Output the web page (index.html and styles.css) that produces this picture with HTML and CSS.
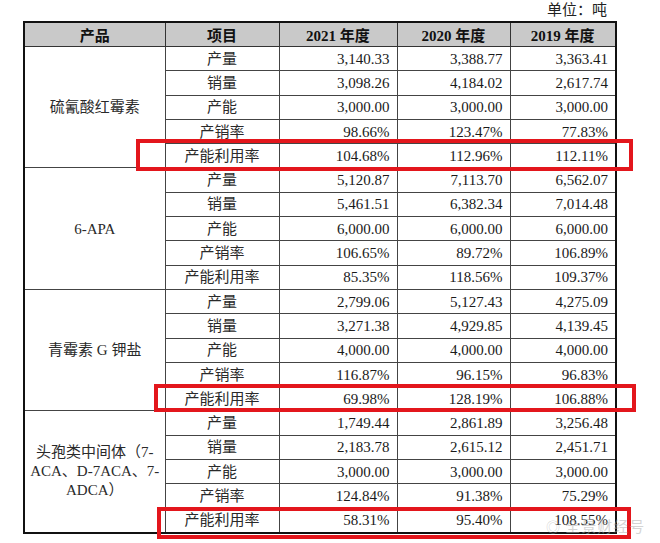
FILE: index.html
```html
<!DOCTYPE html>
<html lang="zh">
<head>
<meta charset="utf-8">
<title>产销量表</title>
<link rel="stylesheet" href="styles.css">
</head>
<body>
<div class="page">
  <div class="unit">单位：吨</div>
  <table class="data">
    <colgroup>
      <col class="c-prod"><col class="c-item"><col class="c-y1"><col class="c-y2"><col class="c-y3">
    </colgroup>
    <thead>
      <tr><th>产品</th><th>项目</th><th>2021 年度</th><th>2020 年度</th><th>2019 年度</th></tr>
    </thead>
    <tbody class="grp">
      <tr><td class="prod" rowspan="5">硫氰酸红霉素</td><td class="item">产量</td><td class="num">3,140.33</td><td class="num">3,388.77</td><td class="num">3,363.41</td></tr>
      <tr><td class="item">销量</td><td class="num">3,098.26</td><td class="num">4,184.02</td><td class="num">2,617.74</td></tr>
      <tr><td class="item">产能</td><td class="num">3,000.00</td><td class="num">3,000.00</td><td class="num">3,000.00</td></tr>
      <tr><td class="item">产销率</td><td class="num">98.66%</td><td class="num">123.47%</td><td class="num">77.83%</td></tr>
      <tr><td class="item">产能利用率</td><td class="num">104.68%</td><td class="num">112.96%</td><td class="num">112.11%</td></tr>
    </tbody>
    <tbody class="grp">
      <tr><td class="prod" rowspan="5">6-APA</td><td class="item">产量</td><td class="num">5,120.87</td><td class="num">7,113.70</td><td class="num">6,562.07</td></tr>
      <tr><td class="item">销量</td><td class="num">5,461.51</td><td class="num">6,382.34</td><td class="num">7,014.48</td></tr>
      <tr><td class="item">产能</td><td class="num">6,000.00</td><td class="num">6,000.00</td><td class="num">6,000.00</td></tr>
      <tr><td class="item">产销率</td><td class="num">106.65%</td><td class="num">89.72%</td><td class="num">106.89%</td></tr>
      <tr><td class="item">产能利用率</td><td class="num">85.35%</td><td class="num">118.56%</td><td class="num">109.37%</td></tr>
    </tbody>
    <tbody class="grp">
      <tr><td class="prod" rowspan="5">青霉素 G 钾盐</td><td class="item">产量</td><td class="num">2,799.06</td><td class="num">5,127.43</td><td class="num">4,275.09</td></tr>
      <tr><td class="item">销量</td><td class="num">3,271.38</td><td class="num">4,929.85</td><td class="num">4,139.45</td></tr>
      <tr><td class="item">产能</td><td class="num">4,000.00</td><td class="num">4,000.00</td><td class="num">4,000.00</td></tr>
      <tr><td class="item">产销率</td><td class="num">116.87%</td><td class="num">96.15%</td><td class="num">96.83%</td></tr>
      <tr><td class="item">产能利用率</td><td class="num">69.98%</td><td class="num">128.19%</td><td class="num">106.88%</td></tr>
    </tbody>
    <tbody class="grp">
      <tr><td class="prod multi" rowspan="5">头孢类中间体（7-<br>ACA、D-7ACA、7-<br>ADCA）</td><td class="item">产量</td><td class="num">1,749.44</td><td class="num">2,861.89</td><td class="num">3,256.48</td></tr>
      <tr><td class="item">销量</td><td class="num">2,183.78</td><td class="num">2,615.12</td><td class="num">2,451.71</td></tr>
      <tr><td class="item">产能</td><td class="num">3,000.00</td><td class="num">3,000.00</td><td class="num">3,000.00</td></tr>
      <tr><td class="item">产销率</td><td class="num">124.84%</td><td class="num">91.38%</td><td class="num">75.29%</td></tr>
      <tr><td class="item">产能利用率</td><td class="num">58.31%</td><td class="num">95.40%</td><td class="num">108.55%</td></tr>
    </tbody>
  </table>
  <div class="hl hl-1"></div>
  <div class="hl hl-2"></div>
  <div class="hl hl-3"></div>
  <div class="watermark"><span class="wm-icon">◎</span> 全景财经号</div>
</div>
</body>
</html>
```

FILE: styles.css
```css
html, body {
  margin: 0;
  padding: 0;
  background: #ffffff;
}
.page {
  position: relative;
  width: 660px;
  height: 543px;
  overflow: hidden;
  font-family: "Liberation Serif", "Noto Sans CJK SC", serif;
  color: #1a1a1a;
  font-size: 15px;
}
.unit {
  height: 21px;
  line-height: 21px;
  text-align: right;
  padding-right: 53px;
  font-size: 15px;
  color: #222;
}
.data {
  margin-left: 23px;
  border-collapse: collapse;
  table-layout: fixed;
  width: 592px;
  border: 2px solid #111;
}
.c-prod { width: 141px; }
.c-item { width: 114px; }
.c-y1 { width: 118px; }
.c-y2 { width: 113px; }
.c-y3 { width: 106px; }
.data th {
  background: #c9c9c9;
  font-weight: bold;
  height: 23px;
  padding: 0;
  border: 1px solid #333;
  text-align: center;
  font-size: 15px;
  color: #111;
}
.data td {
  height: 23.3px;
  padding: 0;
  border: 1px solid #444;
  line-height: 18px;
}
.grp {
  border-top: 1.5px solid #222;
}
.prod {
  text-align: center;
  vertical-align: middle;
  padding: 0 4px;
  color: #2a2a2a;
}
.multi {
  line-height: 19px !important;
  padding-top: 4px;
}
.item {
  text-align: center;
  color: #2a2a2a;
}
.num {
  text-align: right;
  padding-right: 7px !important;
}
.hl {
  position: absolute;
  border: 4px solid #e3161c;
  box-sizing: border-box;
}
.hl-1 { left: 136px; top: 139px; width: 497px; height: 32px; }
.hl-2 { left: 154px; top: 384px; width: 482px; height: 28px; }
.hl-3 { left: 157px; top: 507px; width: 474px; height: 32px; }
.watermark {
  position: absolute;
  left: 546px;
  top: 515px;
  font-family: "Noto Sans CJK SC", sans-serif;
  font-size: 15px;
  color: rgba(170, 170, 170, 0.5);
  letter-spacing: 1px;
}
.wm-icon {
  font-size: 14px;
}
```
